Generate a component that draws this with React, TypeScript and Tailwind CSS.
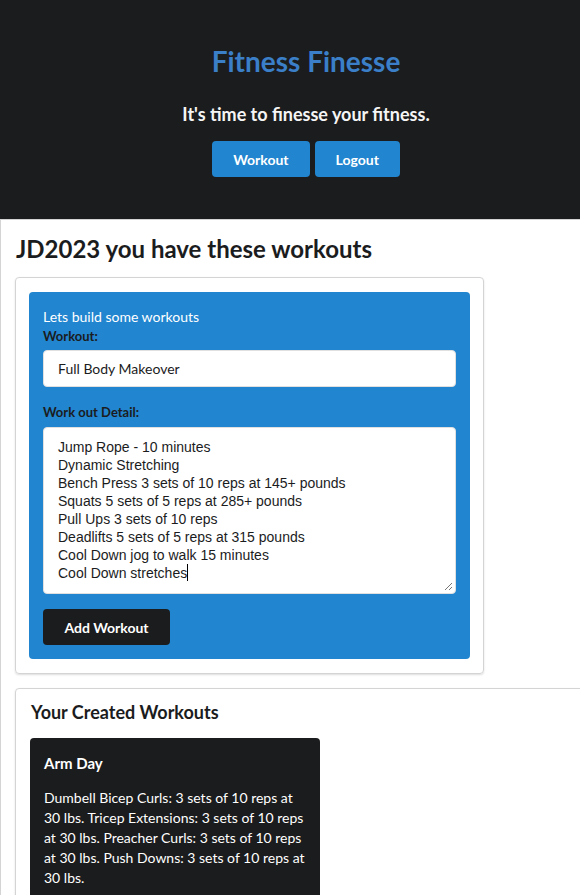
import React from "react";

const lines = [
  "Jump Rope - 10 minutes",
  "Dynamic Stretching",
  "Bench Press 3 sets of 10 reps at 145+ pounds",
  "Squats 5 sets of 5 reps at 285+ pounds",
  "Pull Ups 3 sets of 10 reps",
  "Deadlifts 5 sets of 5 reps at 315 pounds",
  "Cool Down jog to walk 15 minutes",
  "Cool Down stretches",
];

export default function App() {
  return (
    <div className="w-[580px] h-[895px] overflow-hidden bg-white font-['Lato','Noto_Sans',sans-serif] text-[#1b1c1d]">
      <header className="h-[219px] bg-[#1b1c1d] flex flex-col items-center pl-[32px] pt-[41px]">
        <h1 className="text-[28px] leading-[40px] font-bold text-[#3a7fc8]">Fitness Finesse</h1>
        <p className="mt-[20px] text-[18px] leading-[26px] font-bold text-[#f5f5f5]">It's time to finesse your fitness.</p>
        <div className="mt-[14px] flex gap-[5px]">
          <button className="h-[36px] px-[21px] rounded-[4px] bg-[#2185d0] text-white text-[14px] font-bold">Workout</button>
          <button className="h-[36px] px-[21px] rounded-[4px] bg-[#2185d0] text-white text-[14px] font-bold">Logout</button>
        </div>
      </header>
      <main className="border-t border-l border-[#d4d4d5] pl-[14px] pt-[14px]">
        <h2 className="text-[24px] leading-[30px] font-bold pl-[1px]">JD2023 you have these workouts</h2>
        <section className="mt-[13px] w-[469px] border border-[#d4d4d5] rounded-[4px] shadow-[0_1px_2px_rgba(34,36,38,0.15)] px-[13px] py-[14px]">
          <div className="bg-[#2185d0] rounded-[4px] px-[14px] pt-[15px] pb-[14px]">
            <p className="text-[14px] leading-[20px] text-white">Lets build some workouts</p>
            <label className="block text-[13px] leading-[18px] font-bold text-[#1b1c1d]">Workout:</label>
            <div className="mt-[5px] h-[37px] bg-white rounded-[4px] border border-[#e0e0e0] flex items-center pl-[14px] text-[14px] text-[#1b1c1d]">
              Full Body Makeover
            </div>
            <label className="block mt-[16px] text-[13px] leading-[18px] font-bold text-[#1b1c1d]">Work out Detail:</label>
            <div className="relative mt-[6px] h-[167px] bg-white rounded-[4px] border border-[#e0e0e0] pl-[14px] pt-[10px] font-['Liberation_Sans',Arial,sans-serif] text-[14px] leading-[18px] text-[#1b1c1d]">
              {lines.map((l, i) => (
                <div key={i}>
                  {l}
                  {i === lines.length - 1 && <span className="inline-block w-[1px] h-[17px] bg-black align-[-3px]" />}
                </div>
              ))}
              <svg className="absolute right-[2px] bottom-[2px]" width="9" height="9" viewBox="0 0 9 9">
                <line x1="1" y1="8" x2="8" y2="1" stroke="#777" strokeWidth="1" />
                <line x1="5" y1="8" x2="8" y2="5" stroke="#777" strokeWidth="1" />
              </svg>
            </div>
            <button className="mt-[15px] h-[36px] w-[127px] rounded-[4px] bg-[#1b1c1d] text-white text-[14px] font-bold">Add Workout</button>
          </div>
        </section>
        <section className="mt-[14px] w-[600px] border border-[#d4d4d5] rounded-[4px] shadow-[0_1px_2px_rgba(34,36,38,0.15)] px-[14px] pt-[10px] pb-[20px]">
          <h3 className="text-[18px] leading-[26px] font-bold pl-[1px]">Your Created Workouts</h3>
          <div className="mt-[13px] w-[290px] bg-[#1b1c1d] rounded-[4px] px-[14px] pt-[14px] pb-[20px] text-white">
            <h4 className="text-[15px] leading-[22px] font-bold">Arm Day</h4>
            <p className="mt-[14px] text-[14px] leading-[20px]">
              Dumbell Bicep Curls: 3 sets of 10 reps at 30 lbs. Tricep Extensions: 3 sets of 10 reps at 30 lbs. Preacher Curls: 3 sets of 10 reps at 30 lbs. Push Downs: 3 sets of 10 reps at 30 lbs.
            </p>
          </div>
        </section>
      </main>
    </div>
  );
}
